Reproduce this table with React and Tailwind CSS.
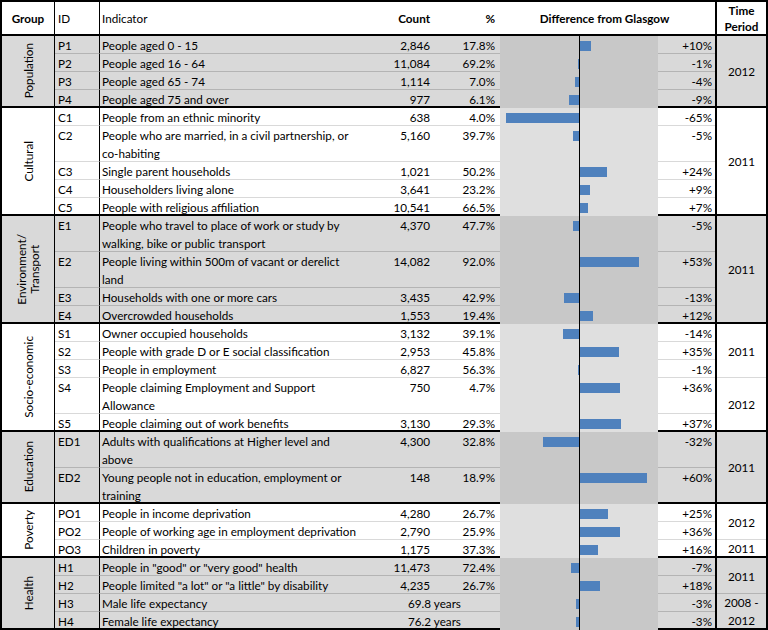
import React from 'react';

const groups = [
  {
    name: ['Population'],
    gray: true,
    rows: [
      { id: 'P1', text: ['People aged 0 - 15'], count: '2,846', pct: '17.8%', diff: 10 },
      { id: 'P2', text: ['People aged 16 - 64'], count: '11,084', pct: '69.2%', diff: -1 },
      { id: 'P3', text: ['People aged 65 - 74'], count: '1,114', pct: '7.0%', diff: -4 },
      { id: 'P4', text: ['People aged 75 and over'], count: '977', pct: '6.1%', diff: -9 },
    ],
    periods: [{ label: ['2012'], h: 'h-[72px]' }],
  },
  {
    name: ['Cultural'],
    gray: false,
    rows: [
      { id: 'C1', text: ['People from an ethnic minority'], count: '638', pct: '4.0%', diff: -65 },
      { id: 'C2', text: ['People who are married, in a civil partnership, or', 'co-habiting'], count: '5,160', pct: '39.7%', diff: -5 },
      { id: 'C3', text: ['Single parent households'], count: '1,021', pct: '50.2%', diff: 24 },
      { id: 'C4', text: ['Householders living alone'], count: '3,641', pct: '23.2%', diff: 9 },
      { id: 'C5', text: ['People with religious affiliation'], count: '10,541', pct: '66.5%', diff: 7 },
    ],
    periods: [{ label: ['2011'], h: 'h-[108px]' }],
  },
  {
    name: ['Environment/', 'Transport'],
    gray: true,
    rows: [
      { id: 'E1', text: ['People who travel to place of work or study by', 'walking, bike or public transport'], count: '4,370', pct: '47.7%', diff: -5 },
      { id: 'E2', text: ['People living within 500m of vacant or derelict', 'land'], count: '14,082', pct: '92.0%', diff: 53 },
      { id: 'E3', text: ['Households with one or more cars'], count: '3,435', pct: '42.9%', diff: -13 },
      { id: 'E4', text: ['Overcrowded households'], count: '1,553', pct: '19.4%', diff: 12 },
    ],
    periods: [{ label: ['2011'], h: 'h-[108px]' }],
  },
  {
    name: ['Socio-economic'],
    gray: false,
    rows: [
      { id: 'S1', text: ['Owner occupied households'], count: '3,132', pct: '39.1%', diff: -14 },
      { id: 'S2', text: ['People with grade D or E social classification'], count: '2,953', pct: '45.8%', diff: 35 },
      { id: 'S3', text: ['People in employment'], count: '6,827', pct: '56.3%', diff: -1 },
      { id: 'S4', text: ['People claiming Employment and Support', 'Allowance'], count: '750', pct: '4.7%', diff: 36 },
      { id: 'S5', text: ['People claiming out of work benefits'], count: '3,130', pct: '29.3%', diff: 37 },
    ],
    periods: [
      { label: ['2011'], h: 'h-[54px]' },
      { label: ['2012'], h: 'h-[54px]' },
    ],
  },
  {
    name: ['Education'],
    gray: true,
    rows: [
      { id: 'ED1', text: ['Adults with qualifications at Higher level and', 'above'], count: '4,300', pct: '32.8%', diff: -32 },
      { id: 'ED2', text: ['Young people not in education, employment or', 'training'], count: '148', pct: '18.9%', diff: 60 },
    ],
    periods: [{ label: ['2011'], h: 'h-[72px]' }],
  },
  {
    name: ['Poverty'],
    gray: false,
    rows: [
      { id: 'PO1', text: ['People in income deprivation'], count: '4,280', pct: '26.7%', diff: 25 },
      { id: 'PO2', text: ['People of working age in employment deprivation'], count: '2,790', pct: '25.9%', diff: 36 },
      { id: 'PO3', text: ['Children in poverty'], count: '1,175', pct: '37.3%', diff: 16 },
    ],
    periods: [
      { label: ['2012'], h: 'h-[36px]' },
      { label: ['2011'], h: 'h-[18px]' },
    ],
  },
  {
    name: ['Health'],
    gray: true,
    rows: [
      { id: 'H1', text: ['People in "good" or "very good" health'], count: '11,473', pct: '72.4%', diff: -7 },
      { id: 'H2', text: ['People limited "a lot" or "a little" by disability'], count: '4,235', pct: '26.7%', diff: 18 },
      { id: 'H3', text: ['Male life expectancy'], years: '69.8 years', diff: -3 },
      { id: 'H4', text: ['Female life expectancy'], years: '76.2 years', diff: -3 },
    ],
    periods: [
      { label: ['2011'], h: 'h-[36px]' },
      { label: ['2008 -', '2012'], h: 'h-[36px]' },
    ],
  },
];

// px per percentage point on the difference chart
const SCALE = 1.12;

const Bars = ({ diff, gray }) => {
  const w = Math.max(1, Math.round(Math.abs(diff) * SCALE));
  return (
    <div className={`flex w-[158px] shrink-0 ${gray ? 'bg-[#c8c8c8]' : 'bg-[#dfdfdf]'}`}>
      <div className="flex w-[79px] justify-end pt-[5px]">
        {diff < 0 && <div className="h-[10px] bg-[#4f81bd]" style={{ width: w }}></div>}
      </div>
      <div className="w-px bg-black"></div>
      <div className="flex flex-1 pt-[5px]">
        {diff > 0 && <div className="h-[10px] bg-[#4f81bd]" style={{ width: w }}></div>}
      </div>
    </div>
  );
};

const Row = ({ row, last, gray }) => {
  const line = last ? 'border-b-2 border-black' : gray ? 'border-b border-[#b4b4b4]' : 'border-b border-[#d9d9d9]';
  const height = row.text.length > 1 ? 'h-[36px]' : 'h-[18px]';
  const sign = row.diff > 0 ? '+' : '';

  return (
    <div className={`flex ${height}`}>
      <div className={`w-[45px] shrink-0 border-r border-r-black pl-[3px] ${line}`}>{row.id}</div>
      <div className={`w-[282px] shrink-0 whitespace-nowrap pl-[2px] ${line}`}>
        {row.text.map((t) => (
          <div key={t}>{t}</div>
        ))}
      </div>
      {row.years ? (
        <div className={`w-[118px] shrink-0 whitespace-pre pl-[26px] ${line}`}>{row.years}</div>
      ) : (
        <>
          <div className={`w-[51px] shrink-0 pr-[3px] text-right ${line}`}>{row.count}</div>
          <div className={`w-[67px] shrink-0 pr-[5px] text-right ${line}`}>{row.pct}</div>
        </>
      )}
      <Bars diff={row.diff} gray={gray} />
      <div className={`w-[57px] shrink-0 pr-[3px] text-right ${line}`}>
        {sign}
        {row.diff}%
      </div>
    </div>
  );
};

const Group = ({ group }) => {
  const bg = group.gray ? 'bg-[#d9d9d9]' : 'bg-white';
  const thin = group.gray ? 'border-[#b4b4b4]' : 'border-[#d9d9d9]';

  return (
    <div className={`flex ${bg}`}>
      <div className="flex w-[53px] shrink-0 items-center justify-center border-r border-b-2 border-black">
        <div className="rotate-180 text-center leading-[13px] [writing-mode:vertical-rl]">
          {group.name.map((n) => (
            <div key={n}>{n}</div>
          ))}
        </div>
      </div>
      <div className="flex flex-col">
        {group.rows.map((row, i) => (
          <Row key={row.id} row={row} gray={group.gray} last={i === group.rows.length - 1} />
        ))}
      </div>
      <div className="flex w-[51px] shrink-0 flex-col border-l-2 border-black">
        {group.periods.map((p, i) => (
          <div
            key={i}
            className={`flex ${p.h} flex-col items-center justify-center text-center ${
              i === group.periods.length - 1 ? 'border-b-2 border-black' : `border-b ${thin}`
            }`}
          >
            {p.label.map((l) => (
              <div key={l}>{l}</div>
            ))}
          </div>
        ))}
      </div>
    </div>
  );
};

const App = () => {
  return (
    <div className="h-[630px] w-[768px] overflow-hidden bg-white">
      <div className="border-x-2 border-t-2 border-black font-['Lato','Liberation_Sans',sans-serif] text-[11.7px] leading-[18px] text-black">
        {/* Header */}
        <div className="flex h-[34px] border-b-2 border-black">
          <div className="flex w-[53px] shrink-0 items-center justify-center border-r border-black font-bold">Group</div>
          <div className="flex w-[45px] shrink-0 items-center border-r border-black pl-[3px]">ID</div>
          <div className="flex w-[282px] shrink-0 items-center pl-[2px]">Indicator</div>
          <div className="flex w-[51px] shrink-0 items-center justify-end pr-[3px] font-bold">Count</div>
          <div className="flex w-[67px] shrink-0 items-center justify-end pr-[5px] font-bold">%</div>
          <div className="flex w-[215px] shrink-0 items-center justify-center pr-[6px] font-bold">Difference from Glasgow</div>
          <div className="flex w-[51px] shrink-0 flex-col items-center justify-center border-l-2 border-black text-center font-bold leading-[16px]">
            <div>Time</div>
            <div>Period</div>
          </div>
        </div>

        {groups.map((g) => (
          <Group key={g.name[0]} group={g} />
        ))}
      </div>
    </div>
  );
};

export default App;
